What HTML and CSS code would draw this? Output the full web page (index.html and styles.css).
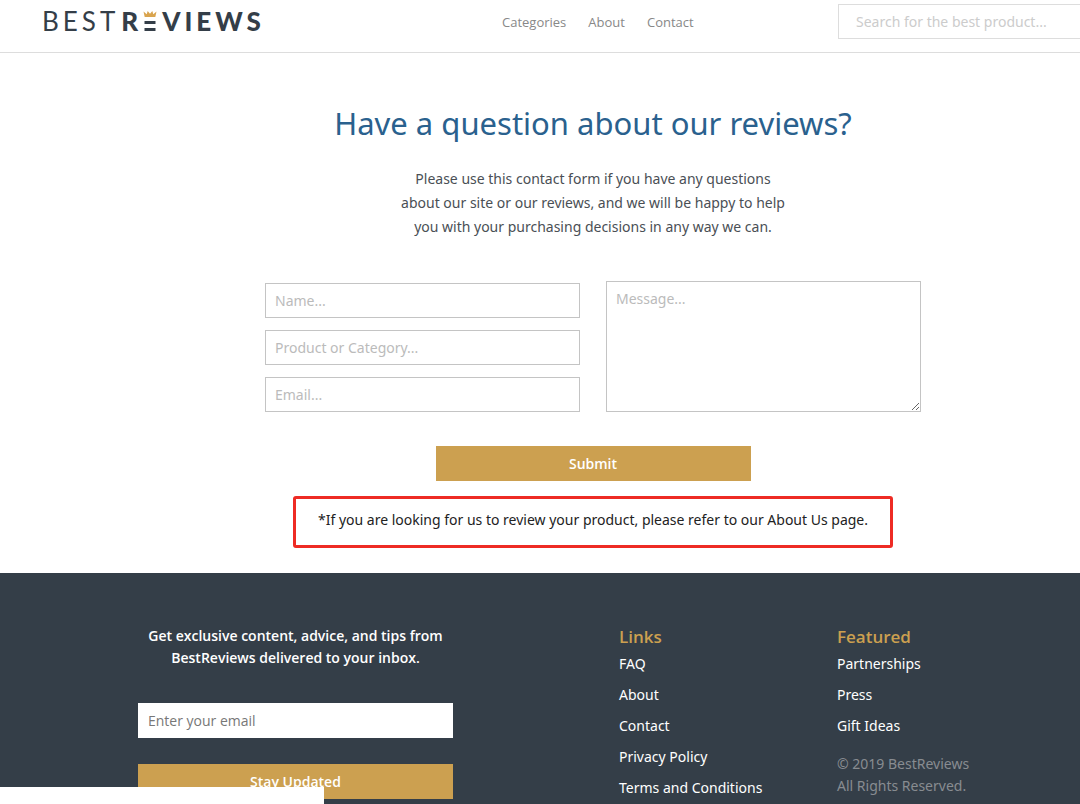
FILE: index.html
```html
<!DOCTYPE html>
<html lang="en">
<head>
    <meta charset="UTF-8">
    <meta name="viewport" content="width=device-width, initial-scale=1.0">
    <title>Contact - BestReviews</title>
    <link rel="stylesheet" href="styles.css">
</head>
<body>
<div class="page">

    <header class="header">
        <a class="logo" href="#" aria-label="BestReviews">BEST<b>R<svg class="crown" width="14" height="22" viewBox="0 0 13 22" aria-hidden="true">
            <path fill="#d9a44e" d="M0 1.5 L3.2 4.2 L4.2 1 L6.5 3.8 L8.8 1 L9.8 4.2 L13 1.5 L11.8 7 H1.2 Z"/>
            <path fill="#343e48" d="M1 11h11v3H1zM1 18h11v3H1z"/>
        </svg>VIEWS</b></a>
        <nav class="nav">
            <a href="#">Categories</a>
            <a href="#">About</a>
            <a href="#">Contact</a>
        </nav>
        <input class="field search" type="search" placeholder="Search for the best product..." aria-label="Search">
    </header>

    <main class="contact">
        <h1>Have a question about our reviews?</h1>
        <p class="intro">Please use this contact form if you have any questions<br>
            about our site or our reviews, and we will be happy to help<br>
            you with your purchasing decisions in any way we can.</p>

        <form class="contact-form">
            <div class="inputs">
                <input class="field" type="text" placeholder="Name..." aria-label="Name">
                <input class="field" type="text" placeholder="Product or Category..." aria-label="Product or Category">
                <input class="field" type="email" placeholder="Email..." aria-label="Email">
            </div>
            <textarea class="field message" placeholder="Message..." aria-label="Message"></textarea>
            <button class="btn submit" type="submit">Submit</button>
        </form>

        <p class="note">*If you are looking for us to review your product, please refer to our About Us page.</p>
    </main>

    <footer class="footer">
        <form class="newsletter">
            <label for="email">Get exclusive content, advice, and tips from<br>BestReviews delivered to your inbox.</label>
            <input class="field" type="email" id="email" placeholder="Enter your email">
            <button class="btn" type="submit">Stay Updated</button>
        </form>
        <div class="links">
            <h2>Links</h2>
            <a href="#">FAQ</a>
            <a href="#">About</a>
            <a href="#">Contact</a>
            <a href="#">Privacy Policy</a>
            <a href="#">Terms and Conditions</a>
        </div>
        <div class="links">
            <h2>Featured</h2>
            <a href="#">Partnerships</a>
            <a href="#">Press</a>
            <a href="#">Gift Ideas</a>
            <p class="copyright">© 2019 BestReviews<br>All Rights Reserved.</p>
        </div>
    </footer>

</div>
<div class="status-bar"></div>
</body>
</html>
```
FILE: styles.css
```css
* {
    box-sizing: border-box;
}

body {
    margin: 0;
    font-family: "Noto Sans", "Open Sans", sans-serif;
    font-size: 14px;
    color: #4a4f55;
    background-color: #fff;
    overflow: hidden;
}

a {
    color: inherit;
    text-decoration: none;
}

/* the layout needs at least this much room */
.page {
    min-width: 1186px;
    min-height: 100vh;
    display: flex;
    flex-direction: column;
}

/* Form controls */
.field {
    width: 100%;
    height: 35px;
    padding: 0 9px;
    border: 1px solid #c4c4c4;
    border-radius: 0;
    background-color: #fff;
    font-family: inherit;
    font-size: 14px;
    color: #343e48;
}

.field::placeholder {
    color: #bbb;
}

.btn {
    width: 100%;
    height: 35px;
    border: none;
    background-color: #cca050;
    color: #fff;
    font-family: "Open Sans", sans-serif;
    font-size: 14px;
    font-weight: 600;
    cursor: pointer;
}

/* Header */
.header {
    display: grid;
    grid-template-columns: 460px 1fr 315px;
    align-items: start;
    height: 53px;
    padding: 4px 33px 0 42px;
    border-bottom: 1px solid #ddd;
}

.logo {
    font-family: Lato, sans-serif;
    font-size: 26px;
    line-height: 35px;
    letter-spacing: 4px;
    color: #343e48;
}

.logo b {
    margin-left: 2px;
    font-weight: 900;
}

.crown {
    margin: 0 5px 0 1px;
    vertical-align: -1px;
}

.nav {
    display: flex;
    gap: 22px;
    font-family: "Open Sans", sans-serif;
    font-size: 13px;
    line-height: 36px;
    color: #888;
}

.search {
    padding: 0 17px;
    border-color: #ddd;
}

.search::placeholder {
    color: #ccc;
}

/* Contact form */
.contact {
    padding: 46px 0 25px;
    text-align: center;
}

h1 {
    margin: 0;
    font-size: 31px;
    font-weight: 400;
    line-height: 48px;
    color: #2a618e;
}

.intro {
    margin: 20px 0 0;
    line-height: 24px;
}

.contact-form {
    display: grid;
    grid-template-columns: 315px 315px;
    justify-content: center;
    align-items: end;
    column-gap: 26px;
    row-gap: 34px;
    margin-top: 42px;
}

.inputs {
    display: grid;
    gap: 12px;
}

.message {
    display: block;
    height: 131px;
    padding: 7px 9px;
}

.submit {
    grid-column: 1 / 3;
    justify-self: center;
    width: 315px;
}

.note {
    width: fit-content;
    margin: 15px auto 0;
    padding: 9px 22px 13px;
    border: 3px solid #ee2b24;
    border-radius: 3px;
    line-height: 24px;
    color: #222;
}

/* Footer */
.footer {
    flex: 1;
    display: grid;
    grid-template-columns: 315px 218px 218px;
    padding: 52px 0 0 138px;
    background-color: #343e48;
    color: #fff;
}

.newsletter {
    font-family: "Open Sans", sans-serif;
    text-align: center;
}

.newsletter label {
    display: block;
    margin-bottom: 34px;
    font-weight: 600;
    line-height: 22px;
}

.newsletter .field {
    margin-bottom: 26px;
    border-color: #fff;
}

.newsletter .field::placeholder {
    color: #777;
}

.links {
    margin-left: 166px;
    white-space: nowrap;
}

h2 {
    margin: 0;
    font-family: "Open Sans", sans-serif;
    font-size: 17px;
    font-weight: 600;
    line-height: 23px;
    color: #cca050;
}

.links a {
    display: block;
    line-height: 31px;
}

.copyright {
    margin: 12px 0 0;
    line-height: 22px;
    color: #888c91;
}

/* browser status strip over the bottom left corner */
.status-bar {
    position: fixed;
    left: 0;
    bottom: 0;
    width: 324px;
    height: 17px;
    background-color: #fff;
}
```
